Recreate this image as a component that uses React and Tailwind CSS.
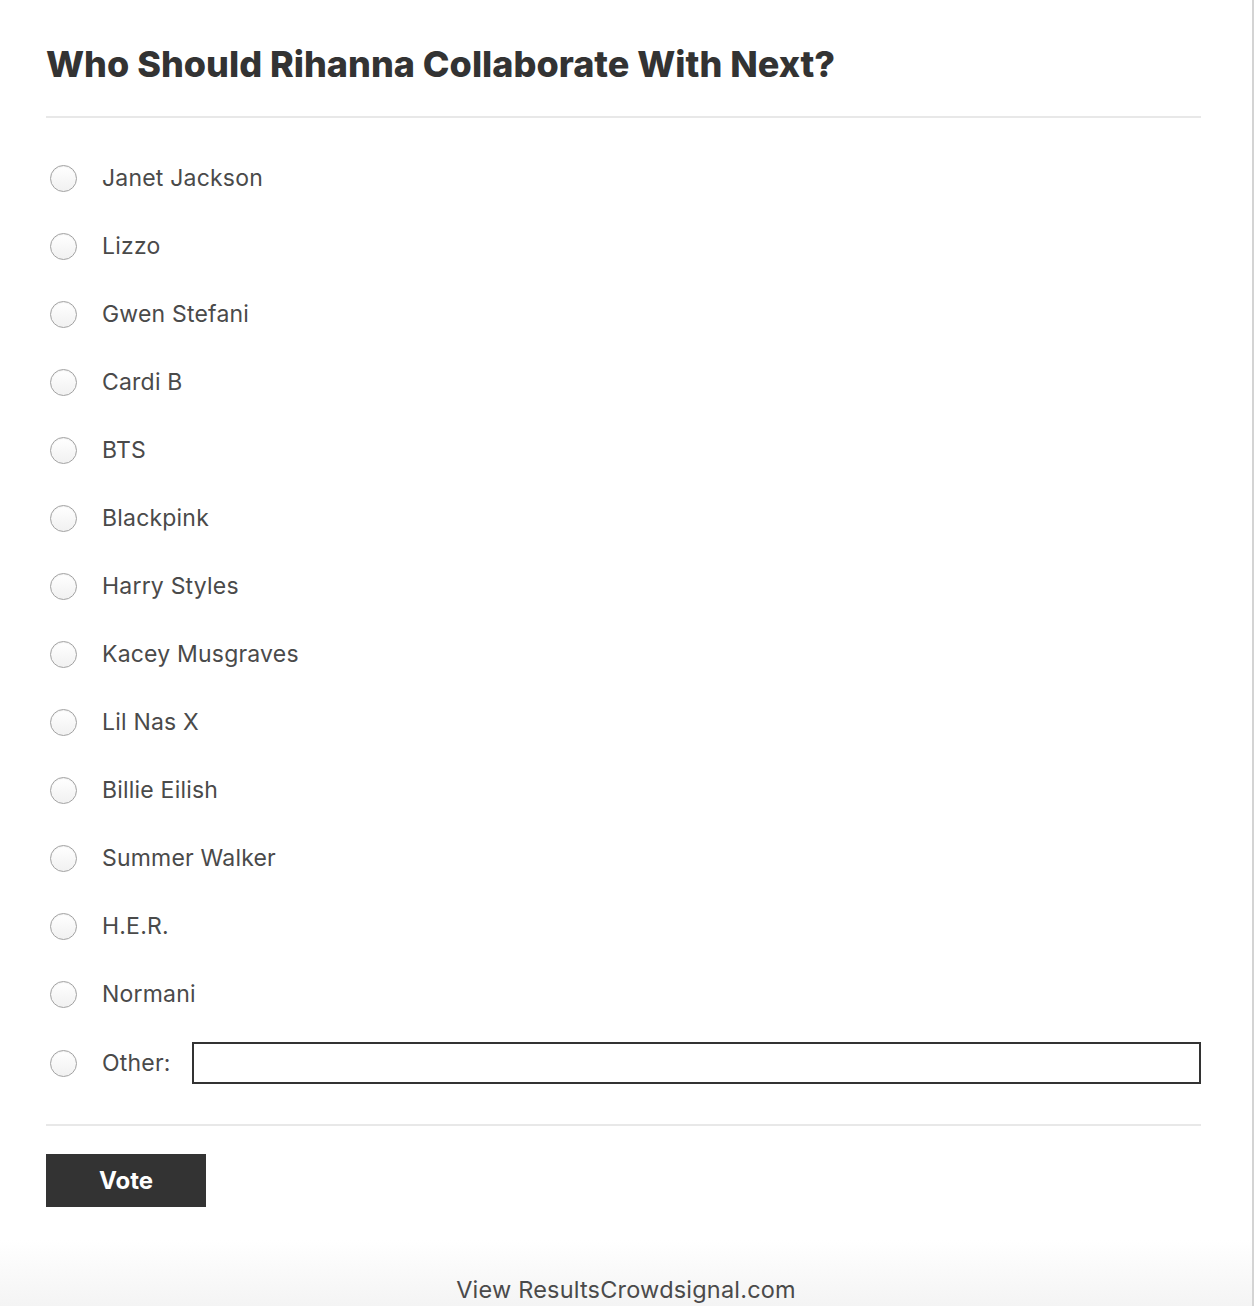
const options = [
  "Janet Jackson",
  "Lizzo",
  "Gwen Stefani",
  "Cardi B",
  "BTS",
  "Blackpink",
  "Harry Styles",
  "Kacey Musgraves",
  "Lil Nas X",
  "Billie Eilish",
  "Summer Walker",
  "H.E.R.",
  "Normani",
];

function Radio() {
  return (
    <span className="block w-[27px] h-[27px] shrink-0 rounded-full border border-[#a2a2a2] bg-gradient-to-b from-white to-[#f1f1f1] shadow-[inset_0_1px_1px_rgba(0,0,0,0.06)]" />
  );
}

export default function App() {
  return (
    <div className="w-[1254px] min-h-[1306px] border-r-2 border-[#d4d4d4] bg-white font-['Inter',sans-serif] text-[#4a4a4a] flex flex-col">
      <div className="pl-[46px] pr-[51px]">
        <h1 className="pt-[44px] pb-[32px] text-[36px] leading-[40px] font-extrabold text-[#333]">
          Who Should Rihanna Collaborate With Next?
        </h1>
        <div className="h-[2px] bg-[#e8e8e8]" />
        <ul className="pt-[26px] pb-[26px]">
          {options.map((name) => (
            <li key={name} className="h-[68px] flex items-center pl-[4px]">
              <Radio />
              <span className="ml-[25px] text-[23px] leading-none tracking-[0.2px]">{name}</span>
            </li>
          ))}
          <li className="h-[70px] flex items-center pl-[4px]">
            <Radio />
            <span className="ml-[25px] text-[23px] leading-none tracking-[0.2px]">Other:</span>
            <input
              type="text"
              className="ml-[21px] flex-1 h-[42px] border-2 border-[#333] bg-white outline-none px-2"
            />
          </li>
        </ul>
        <div className="h-[2px] bg-[#e8e8e8]" />
        <button className="mt-[28px] w-[160px] h-[53px] bg-[#333] text-white text-[24px] font-bold">
          Vote
        </button>
      </div>
      <div className="mt-auto h-[66px] bg-gradient-to-b from-white to-[#f4f4f4] flex items-end justify-center pb-[1px]">
        <span className="text-[23.5px] leading-[30px] tracking-[0.2px]">View Results</span>
        <span className="text-[23.5px] leading-[30px] tracking-[0.2px]">Crowdsignal.com</span>
      </div>
    </div>
  );
}
